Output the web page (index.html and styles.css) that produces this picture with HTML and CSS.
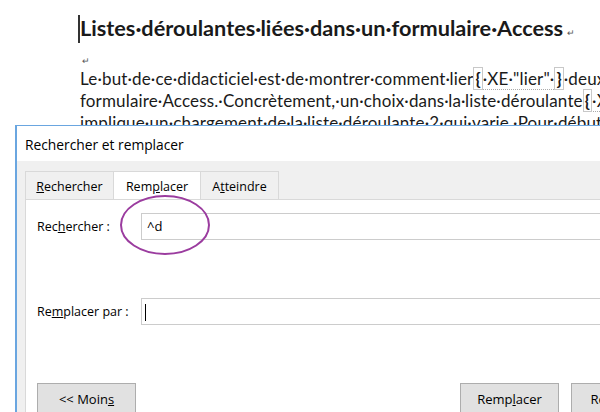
FILE: index.html
```html
<!DOCTYPE html>
<html lang="fr">
<head>
    <meta charset="UTF-8">
    <title>Rechercher et remplacer</title>
    <link rel="stylesheet" href="styles.css">
</head>
<body>

    <div class="doc">
        <p class="heading"><span class="caret"></span>Listes·déroulantes·liées·dans·un·formulaire·Access<span class="mark">↵</span></p>
        <p class="blank"><span class="mark">↵</span></p>
        <p class="para">Le·but·de·ce·didacticiel·est·de·montrer·comment·lier<span class="field"><span class="brace">{</span>·XE·"lier"·<span class="brace">}</span></span>·deux·l</p>
        <p class="para">formulaire·Access.·Concrètement,·un·choix·dans·la·liste·déroulante<span class="field"><span class="brace">{</span>·X</span></p>
        <p class="para">implique·un·chargement·de·la·liste·déroulante·2·qui·varie.·Pour·débuter</p>
    </div>

    <div class="dialog">
        <div class="titlebar">Rechercher et remplacer</div>
        <div class="dlgbody">
            <div class="tabs">
                <div class="tab tab1"><u>R</u>echercher</div>
                <div class="tab tab2 active">Rem<u>p</u>lacer</div>
                <div class="tab tab3">A<u>t</u>teindre</div>
            </div>
            <div class="panel">
                <div class="row">
                    <div class="label">Rec<u>h</u>ercher :</div>
                    <div class="input">^d</div>
                </div>
                <div class="row row2">
                    <div class="label">Re<u>m</u>placer par :</div>
                    <div class="input"><span class="textcaret"></span></div>
                </div>
                <div class="buttons">
                    <div class="btn">&lt;&lt; Moin<u>s</u></div>
                    <div class="spacer"></div>
                    <div class="btn">Remp<u>l</u>acer</div>
                    <div class="btn wide">Remplacer tout</div>
                </div>
            </div>
        </div>
    </div>

    <svg class="circle" width="92" height="64" viewBox="0 0 92 64">
        <ellipse cx="46" cy="32" rx="44" ry="29" fill="none" stroke="#9b3c9f" stroke-width="2"/>
    </svg>

</body>
</html>
```

FILE: styles.css
```css
body {
    margin: 0px;
    width: 600px;
    height: 412px;
    overflow: hidden;
    background-color: #ffffff;
    position: relative;
    white-space: nowrap;
}

.doc {
    padding-left: 80px;
    padding-top: 13px;
    font-family: Lato, "Liberation Sans", sans-serif;
    color: #1a1a1a;
}

.doc p {
    margin: 0px;
}

.heading {
    font-weight: bold;
    font-size: 21.7px;
    line-height: 30px;
    position: relative;
}

.caret {
    position: absolute;
    left: -2px;
    top: 2px;
    width: 2px;
    height: 28px;
    background-color: #333333;
}

.mark {
    font-size: 9px;
    font-weight: normal;
    color: #555555;
    margin-left: 4px;
}

.blank {
    height: 20px;
    line-height: 20px;
}

.blank .mark {
    margin-left: 2px;
}

.para {
    font-size: 17px;
    letter-spacing: 0.15px;
    line-height: 22px;
}

.field {
    border-bottom: 1px dotted #aaaaaa;
}

.brace {
    font-weight: bold;
    border: 1px solid #c8c8c8;
    padding: 0px 1px;
}

.dialog {
    position: absolute;
    left: 15px;
    top: 125px;
    width: 640px;
    height: 300px;
    border-left: 2px solid #6aa6e0;
    border-top: 1px solid #6aa6e0;
    background-color: #f0f0f0;
    font-family: "Open Sans", "Noto Sans", sans-serif;
    font-size: 12.5px;
    color: #000000;
}

.titlebar {
    height: 35px;
    line-height: 38px;
    padding-left: 8px;
    font-size: 13.8px;
    background-color: #ffffff;
}

.dlgbody {
    padding-top: 10px;
    padding-left: 8px;
}

.tabs {
    display: flex;
    height: 28px;
}

.tab {
    border: 1px solid #d9d9d9;
    border-bottom: none;
    border-right: none;
    text-align: center;
    line-height: 30px;
}

.tab1 {
    width: 87px;
}

.tab2 {
    width: 86px;
}

.tab3 {
    width: 77px;
    border-right: 1px solid #d9d9d9;
}

.tab.active {
    background-color: #ffffff;
}

.panel {
    background-color: #ffffff;
    border: 1px solid #d9d9d9;
    height: 250px;
    padding-top: 13px;
    padding-left: 11px;
}

.row {
    display: flex;
    align-items: center;
}

.row2 {
    margin-top: 58px;
}

.label {
    width: 104px;
}

.input {
    flex: 1;
    height: 25px;
    line-height: 25px;
    border: 1px solid #cccccc;
    padding-left: 5px;
    font-size: 13px;
}

.textcaret {
    display: inline-block;
    width: 1px;
    height: 17px;
    background-color: #000000;
    vertical-align: middle;
    margin-left: -2px;
}

.buttons {
    display: flex;
    margin-top: 58px;
}

.btn {
    flex-shrink: 0;
    width: 97px;
    height: 30px;
    line-height: 31px;
    text-align: center;
    background-color: #e1e1e1;
    border: 1px solid #adadad;
    margin-right: 12px;
    font-size: 13px;
}

.btn.wide {
    width: 130px;
}

.spacer {
    flex-shrink: 0;
    width: 312px;
}

.circle {
    position: absolute;
    left: 119px;
    top: 193px;
}
```
